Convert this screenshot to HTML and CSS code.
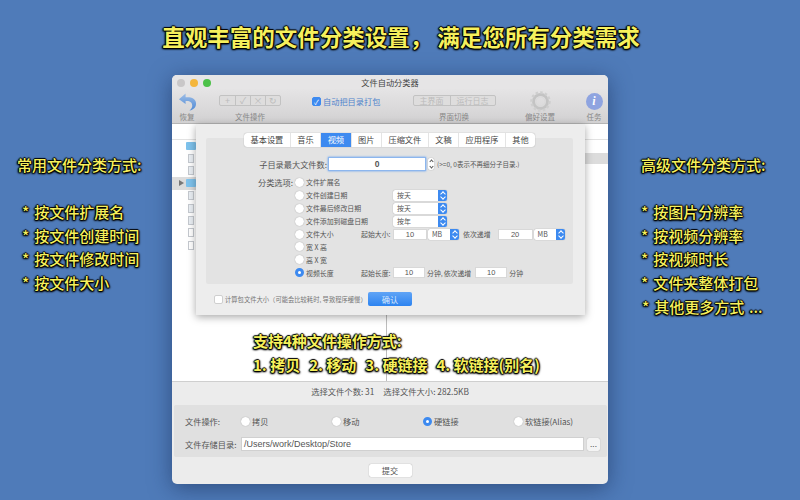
FILE: index.html
```html
<!DOCTYPE html>
<html lang="zh-CN">
<head>
  <meta charset="UTF-8">
  <title>文件自动分类器</title>
  <link rel="stylesheet" href="styles.css">
</head>
<body>
  <h1 class="headline">直观丰富的文件分类设置， 满足您所有分类需求</h1>

  <div class="note note-left">
    <p class="note-title">常用文件分类方式:</p>
    <ul>
      <li>* 按文件扩展名</li>
      <li>* 按文件创建时间</li>
      <li>* 按文件修改时间</li>
      <li>* 按文件大小</li>
    </ul>
  </div>

  <div class="note note-right">
    <p class="note-title">高级文件分类方式:</p>
    <ul>
      <li>* 按图片分辨率</li>
      <li>* 按视频分辨率</li>
      <li>* 按视频时长</li>
      <li>* 文件夹整体打包</li>
      <li class="shifted">* 其他更多方式 ...</li>
    </ul>
  </div>

  <div class="window">
    <div class="titlebar">
      <span class="light red"></span><span class="light yellow"></span><span class="light green"></span>
      <span class="title">文件自动分类器</span>
    </div>

    <div class="toolbar">
      <div class="tool tool-back">
        <svg width="19" height="20" viewBox="0 0 20 20">
          <defs>
            <linearGradient id="backFill" x1="0" y1="0" x2="0" y2="1">
              <stop offset="0" stop-color="#9dbde6"/>
              <stop offset="1" stop-color="#4f8ad6"/>
            </linearGradient>
          </defs>
          <path d="M8 1 L1 7 L8 12 L8 9 C12 8.500 15 10 15 14 C15 16 14 17.500 12 19 C17 18 19 15 19 11.500 C19 6.500 14 4.500 8 5 Z" fill="url(#backFill)"/>
        </svg>
        <span>恢复</span>
      </div>
      <div class="tool tool-ops">
        <div class="seg seg-icons">
          <span>+</span><span>✓</span><span>×</span><span>↻</span>
        </div>
        <span>文件操作</span>
      </div>
      <label class="pack"><span class="check on">✓</span>自动把目录打包</label>
      <div class="tool tool-views">
        <div class="seg seg-text"><span>主界面</span><span>运行日志</span></div>
        <span>界面切换</span>
      </div>
      <div class="tool tool-gear">
        <svg width="21" height="21" viewBox="0 0 21 21">
          <circle cx="10.500" cy="10.500" r="7" fill="none" stroke="#c4c4c4" stroke-width="3"/>
          <circle cx="10.500" cy="10.500" r="9" fill="none" stroke="#cfcfcf" stroke-width="2.500" stroke-dasharray="2.500 2.150"/>
          <circle cx="10.500" cy="10.500" r="4.500" fill="none" stroke="#dadada" stroke-width="1"/>
        </svg>
        <span>偏好设置</span>
      </div>
      <div class="tool tool-info">
        <span class="info">i</span>
        <span>任务</span>
      </div>
    </div>

    <div class="list">
      <div class="list-head"></div>
      <div class="file-row"><i class="folder"></i></div>
      <div class="file-row"><i class="doc"></i></div>
      <div class="file-row"><i class="doc"></i></div>
      <div class="file-row selected"><b class="arrow"></b><i class="folder"></i></div>
      <div class="file-row"><i class="doc"></i></div>
      <div class="file-row"><i class="doc"></i></div>
      <div class="file-row"><i class="doc"></i></div>
      <div class="file-row"><i class="doc small"></i></div>
      <div class="file-row"><i class="doc small"></i></div>
      <span class="col-line"></span>
      <span class="side-row"></span>
    </div>

    <div class="status"><span>选择文件个数: 31</span><span>选择文件大小: 282.5KB</span></div>

    <div class="ops-box">
      <div class="ops-row">
        <span class="ops-label">文件操作:</span>
        <span class="ops-opt copy"><i class="radio"></i>拷贝</span>
        <span class="ops-opt move"><i class="radio"></i>移动</span>
        <span class="ops-opt hard"><i class="radio on"></i>硬链接</span>
        <span class="ops-opt"><i class="radio"></i>软链接(Alias)</span>
      </div>
      <div class="ops-row path-row">
        <span class="ops-label">文件存储目录:</span>
        <span class="path">/Users/work/Desktop/Store</span>
        <span class="browse">...</span>
      </div>
    </div>

    <div class="submit-row"><span class="btn">提交</span></div>

    <div class="sheet">
      <div class="tabs">
        <span>基本设置</span><span>音乐</span><span class="active">视频</span><span>图片</span><span>压缩文件</span><span>文稿</span><span>应用程序</span><span>其他</span>
      </div>
      <div class="group">
        <div class="max-row">
          <span class="field-label">子目录最大文件数:</span>
          <span class="max-input">0</span>
          <span class="stepper"><i></i><i class="down"></i></span>
          <span class="hint">(&gt;=0, 0表示不再细分子目录.)</span>
        </div>
        <div class="options">
          <span class="field-label opt-label">分类选项:</span>
          <div class="opt-list">
            <div class="opt"><i class="radio"></i><span class="opt-name">文件扩展名</span></div>
            <div class="opt"><i class="radio"></i><span class="opt-name">文件创建日期</span><span class="select sel-date">按天<b></b></span></div>
            <div class="opt"><i class="radio"></i><span class="opt-name">文件最后修改日期</span><span class="select sel-date">按天<b></b></span></div>
            <div class="opt"><i class="radio"></i><span class="opt-name">文件添加到磁盘日期</span><span class="select sel-date">按年<b></b></span></div>
            <div class="opt">
              <i class="radio"></i><span class="opt-name">文件大小</span>
              <span class="from">起始大小:</span><span class="num">10</span><span class="select sel-unit">MB<b></b></span>
              <span class="step">依次递增</span><span class="num num-wide">20</span><span class="select sel-unit">MB<b></b></span>
            </div>
            <div class="opt"><i class="radio"></i><span class="opt-name">宽 X 高</span></div>
            <div class="opt"><i class="radio"></i><span class="opt-name">高 X 宽</span></div>
            <div class="opt">
              <i class="radio on"></i><span class="opt-name">视频长度</span>
              <span class="from">起始长度:</span><span class="num num-len">10</span><span class="unit">分钟,</span>
              <span class="step2">依次递增</span><span class="num num-len">10</span><span class="unit">分钟</span>
            </div>
          </div>
        </div>
      </div>
      <div class="sheet-foot">
        <span class="check"></span>
        <span class="foot-text">计算包文件大小（可能会比较耗时, 导致程序缓慢）</span>
        <span class="confirm">确认</span>
      </div>
    </div>

    <div class="note note-center">
      <p>支持4种文件操作方式:</p>
      <p class="ways"><span>1. 拷贝</span><span>2. 移动</span><span>3. 硬链接</span><span>4. 软链接(别名)</span></p>
    </div>
  </div>
</body>
</html>
```

FILE: styles.css
```css
* {
  box-sizing: border-box;
}

html, body {
  height: 100%;
}

body {
  margin: 0;
  overflow: hidden;
  position: relative;
  background: #4f7bb9;
  font-family: "Noto Sans CJK SC", "Liberation Sans", sans-serif;
  color: #555;
}

p, ul, h1 {
  margin: 0;
  padding: 0;
}

ul {
  list-style: none;
}

i, b {
  font-style: normal;
  display: block;
}

/* yellow captions on top of the screenshot */
.headline, .note {
  color: #f6f05c;
  text-shadow: 1px 0 1px #000, -1px 0 1px #000, 0 1px 1px #000, 0 -1px 1px #000, 1px 1px 2px #000, -1px 1px 2px #000;
}

.headline {
  position: absolute;
  left: 0;
  top: 19px;
  width: 800px;
  padding-left: 2px;
  text-align: center;
  font-size: 22.500px;
  line-height: 34px;
  font-weight: 700;
  white-space: pre;
}

.note {
  position: absolute;
  font-weight: 500;
  font-size: 15px;
}

.note-title {
  line-height: 20px;
}

.note-left {
  left: 17px;
  top: 155px;
}

.note-left ul {
  margin: 25px 0 0 5px;
}

.note-left li, .note-right li {
  line-height: 23.700px;
  word-spacing: 1.500px;
}

.note-right {
  left: 641px;
  top: 155px;
}

.note-right ul {
  margin: 25px 0 0 0;
}

.note-right .shifted {
  margin-left: 1px;
}

.note-center {
  left: 81px;
  top: 254px;
  font-size: 15px;
  line-height: 23.500px;
  font-weight: 700;
  z-index: 5;
}

.ways {
  display: flex;
  gap: 9px;
}

/* app window */
.window {
  position: absolute;
  left: 172px;
  top: 75px;
  width: 436px;
  height: 409px;
  display: flex;
  flex-direction: column;
  background: #ececec;
  border-radius: 5px;
  box-shadow: 0 4px 22px rgba(20, 40, 80, 0.55);
}

.titlebar {
  height: 14px;
  display: flex;
  align-items: center;
  gap: 5px;
  padding: 1px 0 0 5px;
  background: #e6e5e6;
  border-radius: 5px 5px 0 0;
  position: relative;
}

.light {
  width: 8px;
  height: 8px;
  border-radius: 50%;
}

.light.red { background: #c9c7c8; }
.light.yellow { background: #f4b63c; }
.light.green { background: #4cc148; }

.title {
  position: absolute;
  left: 0;
  right: 0;
  top: 0;
  text-align: center;
  font-size: 8.200px;
  line-height: 15px;
  color: #444;
}

.toolbar {
  height: 35px;
  flex: none;
  position: relative;
  background: linear-gradient(#e5e4e5, #d2d1d2);
  border-bottom: 1px solid #b5b5b5;
}

.tool {
  position: absolute;
  top: 0;
  display: flex;
  flex-direction: column;
  align-items: center;
  justify-content: flex-end;
  height: 33px;
  font-size: 7.500px;
  line-height: 10px;
  color: #888;
}

.tool-back { left: 4px; width: 22px; }
.tool-ops { left: 48px; width: 60px; }
.tool-views { left: 241px; width: 82px; }
.tool-gear { left: 345px; width: 46px; }
.tool-info { left: 411px; width: 22px; }

.seg {
  display: flex;
  height: 11px;
  margin-bottom: 6px;
  border: 1px solid #c2c2c2;
  border-radius: 2px;
  background: #dedddd;
  color: #bbb;
}

.seg span {
  border-left: 1px solid #c2c2c2;
  text-align: center;
  line-height: 9px;
}

.seg span:first-child {
  border-left: 0;
}

.seg-icons span {
  width: 15px;
  font-size: 9px;
}

.seg-text {
  font-size: 8px;
}

.seg-text span {
  width: 36px;
}

.seg-text span:last-child {
  width: 45px;
}

.pack {
  position: absolute;
  left: 140px;
  top: 6px;
  display: flex;
  align-items: center;
  gap: 2px;
  font-size: 8.200px;
  line-height: 12px;
  color: #4f83cc;
}

.check {
  width: 9px;
  height: 9px;
  border-radius: 2px;
  background: #fff;
  border: 1px solid #cfcfcf;
  display: block;
  color: #fff;
  font-size: 7px;
  line-height: 8px;
  text-align: center;
}

.check.on {
  background: #3d8af0;
  border-color: #3d8af0;
}

.tool-info .info {
  width: 17px;
  height: 17px;
  margin-bottom: 2px;
  border-radius: 50%;
  background: #8fa4e0;
  color: #fff;
  font: italic 700 12px/17px "Liberation Serif", serif;
  text-align: center;
}

/* file list behind the sheet */
.list {
  flex: 1;
  position: relative;
  background: #fff;
  border-bottom: 1px solid #cfcfcf;
  overflow: hidden;
}

.list-head {
  height: 16px;
  border-bottom: 1px solid #e2e2e2;
}

.file-row {
  height: 12.400px;
  width: 24px;
  display: flex;
  align-items: center;
  padding-left: 14px;
  position: relative;
}

.file-row.selected {
  background: #dcdcdc;
}

.arrow {
  position: absolute;
  left: 7px;
  top: 3px;
  border-left: 5px solid #777;
  border-top: 3px solid transparent;
  border-bottom: 3px solid transparent;
}

.folder {
  width: 12px;
  height: 8px;
  background: #7ec2ec;
  border-radius: 1px;
}

.doc {
  width: 6px;
  height: 9px;
  margin-left: 2px;
  background: #e9eef3;
  border: 1px solid #c5c9cf;
}

.doc.small {
  background: #fff;
}

.col-line {
  position: absolute;
  left: 214px;
  top: 0;
  bottom: 0;
  width: 1px;
  background: #bdbdbd;
}

.side-row {
  position: absolute;
  right: 0;
  top: 29px;
  width: 30px;
  height: 11px;
  background: #dcdcdc;
}

.status {
  height: 23px;
  flex: none;
  display: flex;
  justify-content: center;
  gap: 9px;
  font-size: 8.300px;
  line-height: 18px;
  color: #555;
}

.ops-box {
  height: 52px;
  flex: none;
  margin: 0 1px 0 2px;
  background: #e0e0e0;
  border-radius: 2px;
  padding: 5px 7px 0 11px;
  font-size: 8.200px;
}

.ops-row {
  display: flex;
  align-items: center;
  height: 22px;
  line-height: 12px;
}

.ops-label {
  width: 56px;
  flex: none;
}

.ops-opt {
  display: flex;
  align-items: center;
  gap: 2px;
}

.copy { width: 91px; }
.move { width: 91px; }
.hard { width: 91px; }

.path-row {
  height: 14px;
  margin-top: 5px;
}

.path {
  width: 343px;
  height: 14px;
  background: #fff;
  border: 1px solid #d0d0d0;
  font-size: 9px;
  line-height: 12px;
  padding-left: 2px;
  color: #555;
  font-family: "Liberation Sans", sans-serif;
}

.browse {
  width: 13px;
  height: 13px;
  margin-left: 3px;
  background: #f4f4f4;
  border-radius: 2px;
  box-shadow: 0 0 1px #999;
  text-align: center;
  line-height: 11px;
}

.submit-row {
  height: 27px;
  flex: none;
  display: flex;
  justify-content: center;
  align-items: center;
}

.btn {
  width: 43px;
  height: 13px;
  background: #fff;
  border-radius: 2px;
  box-shadow: 0 0 1px #888;
  text-align: center;
  font-size: 8.200px;
  line-height: 13px;
}

.radio {
  width: 9px;
  height: 9px;
  flex: none;
  border-radius: 50%;
  background: #fff;
  box-shadow: 0 0 1px #888;
}

.radio.on {
  background: #fff;
  border: 3px solid #3d8af0;
  box-shadow: none;
}

/* preferences sheet */
.sheet {
  position: absolute;
  left: 24px;
  top: 49px;
  width: 389px;
  height: 191px;
  padding: 14px 12px 0 10px;
  background: #ededed;
  box-shadow: 0 2px 8px rgba(0, 0, 0, 0.35);
  font-size: 8.200px;
  color: #555;
}

.tabs {
  position: absolute;
  left: 48px;
  top: 9px;
  display: flex;
  height: 14px;
  background: #fff;
  border-radius: 3px;
  box-shadow: 0 0 1px #888;
  line-height: 13px;
  color: #444;
  z-index: 2;
}

.tabs span {
  padding: 0 6.500px;
  border-right: 1px solid #e4e4e4;
}

.tabs span:last-child {
  border-right: 0;
}

.tabs .active {
  background: #3d8af0;
  color: #fff;
}

.group {
  height: 146px;
  background: #e3e3e3;
  border-radius: 2px;
  padding-top: 18px;
}

.max-row {
  display: flex;
  align-items: center;
  height: 15px;
}

.field-label {
  width: 121px;
  text-align: right;
  flex: none;
  color: #555;
}

.max-input {
  width: 98px;
  height: 14px;
  margin-left: 1px;
  background: #fff;
  border: 1px solid #8cb6ee;
  box-shadow: 0 0 2px #5d9bef;
  text-align: center;
  font: 700 8.500px/12px "Liberation Sans", sans-serif;
}

.stepper {
  width: 6px;
  height: 12px;
  margin-left: 2px;
  background: #fff;
  border-radius: 2px;
  box-shadow: 0 0 1px #888;
  flex: none;
  display: flex;
  flex-direction: column;
  justify-content: center;
  gap: 2px;
  align-items: center;
}

.stepper i {
  width: 3px;
  height: 3px;
  border-left: 1px solid #555;
  border-top: 1px solid #555;
  transform: rotate(45deg);
}

.stepper i.down {
  transform: rotate(225deg);
}

.hint {
  margin-left: 3px;
  font-size: 6.500px;
  white-space: nowrap;
}

.options {
  display: flex;
  margin-top: 5px;
}

.opt-label {
  width: 87px;
  line-height: 13px;
}

.opt-list {
  margin-left: 2px;
}

.opt {
  display: flex;
  align-items: center;
  height: 12.900px;
  font-size: 6.900px;
  white-space: nowrap;
}

.opt-name {
  width: 87px;
  margin-left: 2px;
  flex: none;
}

.select {
  position: relative;
  display: block;
  height: 11px;
  background: #fff;
  border-radius: 2px;
  box-shadow: 0 0 1px #888;
  line-height: 11px;
  padding-left: 4px;
  flex: none;
}

.select b {
  position: absolute;
  right: 0;
  top: 0;
  width: 9px;
  height: 11px;
  border-radius: 0 2px 2px 0;
  background: #3d8af0;
}

.select b::before, .select b::after {
  content: "";
  position: absolute;
  left: 3px;
  width: 3px;
  height: 3px;
  border-left: 1px solid #fff;
  border-top: 1px solid #fff;
}

.select b::before {
  top: 2px;
  transform: rotate(45deg);
}

.select b::after {
  bottom: 2px;
  transform: rotate(225deg);
}

.sel-date {
  width: 54px;
}

.sel-unit {
  width: 31px;
  margin-left: 1px;
}

.from {
  width: 32px;
  margin-left: -32px;
  flex: none;
}

.num {
  width: 34px;
  height: 11px;
  background: #fff;
  border: 1px solid #d8d8d8;
  text-align: center;
  line-height: 9px;
  font-size: 7.500px;
  font-family: "Liberation Sans", sans-serif;
  flex: none;
}

.num-wide {
  width: 35px;
}

.num-len {
  width: 32px;
}

.step {
  margin: 0 7px 0 4px;
}

.unit {
  margin-left: 2px;
}

.step2 {
  margin: 0 4px 0 1px;
}

.sheet-foot {
  display: flex;
  align-items: center;
  height: 30px;
  margin-left: 8px;
  font-size: 6.300px;
}

.foot-text {
  width: 135px;
  margin-left: 2px;
  color: #777;
  white-space: nowrap;
}

.confirm {
  width: 44px;
  height: 14px;
  margin-left: 8px;
  border-radius: 2px;
  background: linear-gradient(#60a4f6, #2c83f0);
  color: #d7e8fd;
  text-align: center;
  font-size: 8.200px;
  line-height: 14px;
}
```
